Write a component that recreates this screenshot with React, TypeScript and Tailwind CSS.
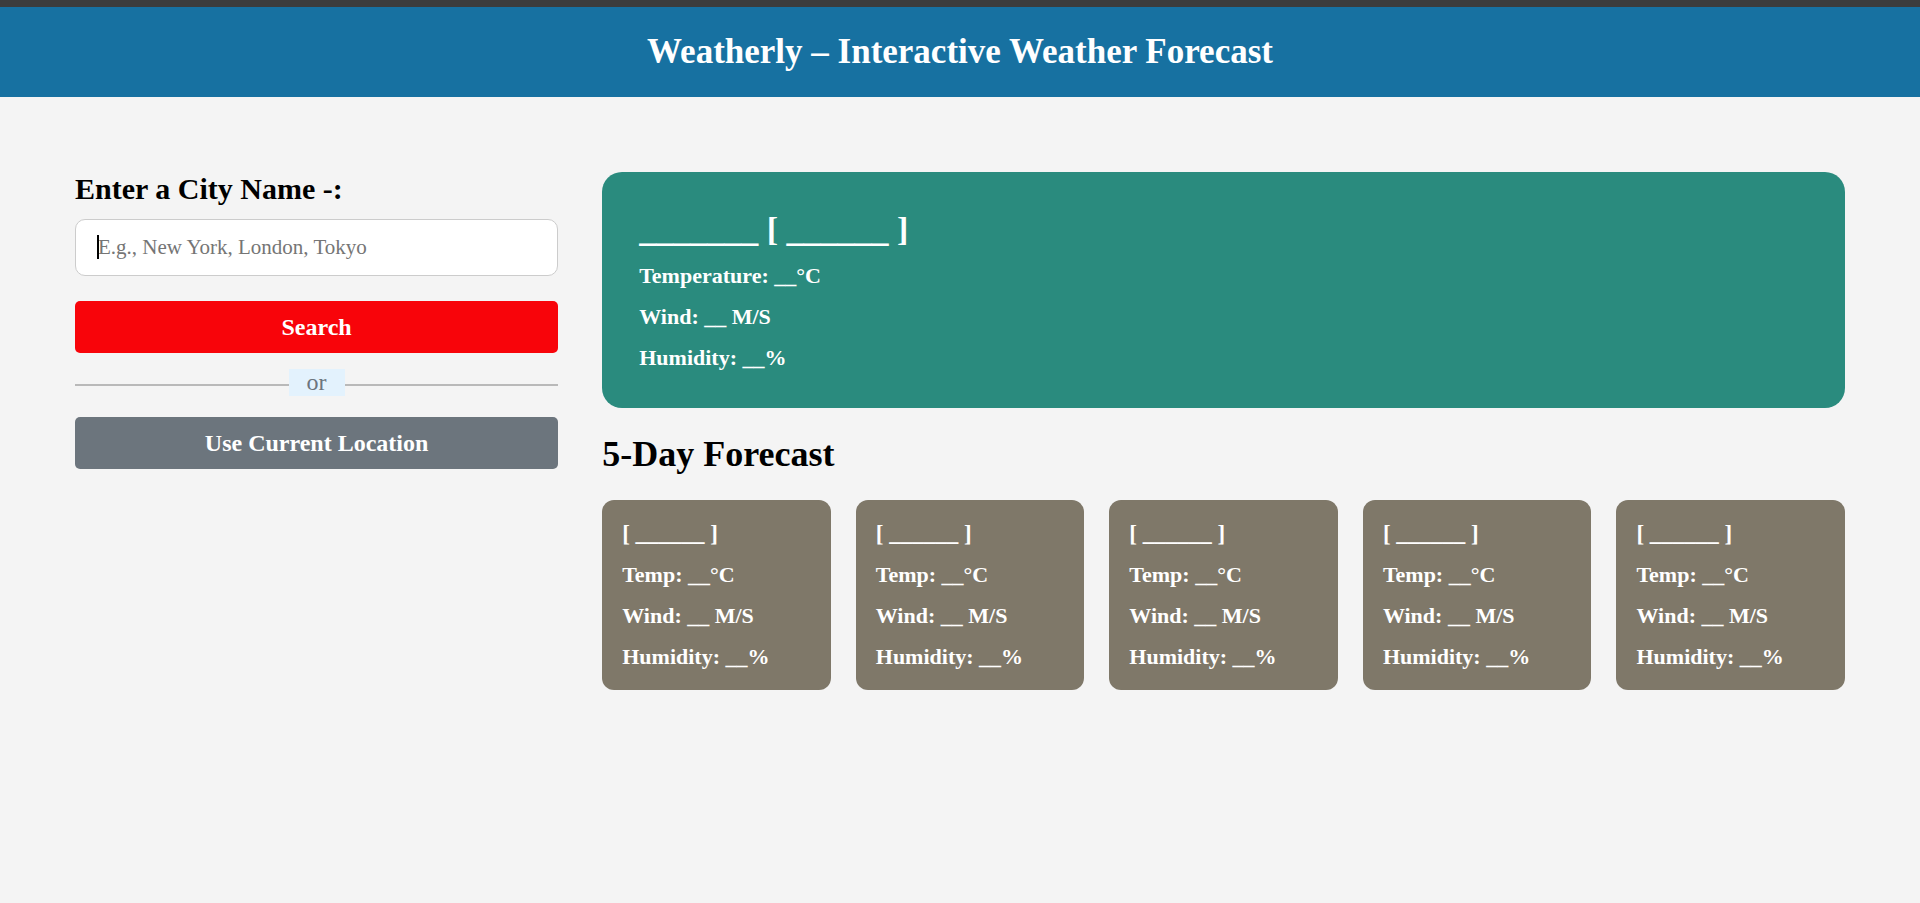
const forecastDays = [1, 2, 3, 4, 5];

function ForecastCard() {
  return (
    <li className="flex min-w-0 flex-1 flex-col gap-[15px] rounded-xl bg-[#7f7869] px-5 pt-[21px] pb-5 text-[22px] leading-[26px] font-bold text-white">
      <h3 className="text-[23px]">[ ______ ]</h3>
      <p>Temp: __°C</p>
      <p>Wind: __ M/S</p>
      <p>Humidity: __%</p>
    </li>
  );
}

export default function App() {
  return (
    <div className="min-h-screen bg-[#f4f4f4] font-['Liberation_Serif','Times_New_Roman',serif] text-black">
      <header className="border-t-[7px] border-[#3c3c3c] bg-[#1771a1] px-6 py-6 text-center text-white">
        <h1 className="text-[35px] leading-[42px] font-bold">Weatherly – Interactive Weather Forecast</h1>
      </header>
      <main className="flex items-start gap-11 p-[75px]">
        <form className="flex w-[27.3%] flex-col" onSubmit={(e) => e.preventDefault()}>
          <label htmlFor="city" className="mb-[13px] text-[30px] leading-[34px] font-bold">
            Enter a City Name -:
          </label>
          <div className="relative">
            <input
              id="city"
              type="text"
              placeholder="E.g., New York, London, Tokyo"
              className="block h-[57px] w-full rounded-[10px] border border-[#cccccc] bg-white px-[22px] text-[21px] outline-none placeholder:text-[#757575]"
            />
            <span aria-hidden="true" className="absolute top-4 left-[22px] h-6 w-0.5 bg-black" />
          </div>
          <button type="submit" className="mt-[25px] h-[52px] rounded-[5px] bg-[#f8040a] text-[24px] font-bold text-white">
            Search
          </button>
          <div className="my-4 flex h-8 items-center text-[24px] text-[#6c757d]">
            <span className="h-0.5 flex-1 bg-[#b9b9b9]" />
            <span className="mb-[5px] bg-[#e3f2fd] px-[18px] leading-[27px]">or</span>
            <span className="h-0.5 flex-1 bg-[#b9b9b9]" />
          </div>
          <button type="button" className="h-[52px] rounded-[5px] bg-[#6c757d] text-[24px] font-bold text-white">
            Use Current Location
          </button>
        </form>
        <div className="min-w-0 flex-1">
          <section className="flex flex-col gap-[15px] rounded-[20px] bg-[#2a8b7e] px-[37px] pt-10 pb-[37px] text-[22px] leading-[26px] font-bold text-white">
            <h2 className="text-[34px] leading-9">_______ [ ______ ]</h2>
            <p>Temperature: __°C</p>
            <p>Wind: __ M/S</p>
            <p>Humidity: __%</p>
          </section>
          <h2 className="my-6 text-[36px] leading-[44px] font-bold">5-Day Forecast</h2>
          <ul className="flex gap-[25px]">
            {forecastDays.map((day) => (
              <ForecastCard key={day} />
            ))}
          </ul>
        </div>
      </main>
    </div>
  );
}
